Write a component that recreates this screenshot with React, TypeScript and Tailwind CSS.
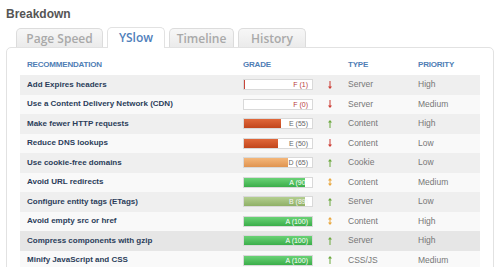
import React from 'react';

type Row = {
  name: string;
  grade: string;
  score: number;
  fill: string;
  textColor: string;
  dir: 'up' | 'down' | 'both';
  type: string;
  priority: string;
};

const rows: Row[] = [
  { name: 'Add Expires headers', grade: 'F (1)', score: 1, fill: 'bg-[#c8463a]', textColor: 'text-[#b83a3a]', dir: 'down', type: 'Server', priority: 'High' },
  { name: 'Use a Content Delivery Network (CDN)', grade: 'F (0)', score: 0, fill: 'bg-[#c8463a]', textColor: 'text-[#b83a3a]', dir: 'down', type: 'Server', priority: 'Medium' },
  { name: 'Make fewer HTTP requests', grade: 'E (55)', score: 55, fill: 'bg-gradient-to-b from-[#e0683a] to-[#c2461c]', textColor: 'text-[#666]', dir: 'up', type: 'Content', priority: 'High' },
  { name: 'Reduce DNS lookups', grade: 'E (50)', score: 50, fill: 'bg-gradient-to-b from-[#e0683a] to-[#c2461c]', textColor: 'text-[#666]', dir: 'down', type: 'Content', priority: 'Low' },
  { name: 'Use cookie-free domains', grade: 'D (65)', score: 65, fill: 'bg-gradient-to-b from-[#f4b77a] to-[#e09450]', textColor: 'text-[#666]', dir: 'up', type: 'Cookie', priority: 'Low' },
  { name: 'Avoid URL redirects', grade: 'A (90)', score: 90, fill: 'bg-gradient-to-b from-[#6ad276] to-[#3aae4a]', textColor: 'text-white', dir: 'both', type: 'Content', priority: 'Medium' },
  { name: 'Configure entity tags (ETags)', grade: 'B (89)', score: 89, fill: 'bg-gradient-to-b from-[#b4cf90] to-[#8fb066]', textColor: 'text-[#f4f4f4]', dir: 'up', type: 'Server', priority: 'Low' },
  { name: 'Avoid empty src or href', grade: 'A (100)', score: 100, fill: 'bg-gradient-to-b from-[#6ad276] to-[#3aae4a]', textColor: 'text-white', dir: 'both', type: 'Content', priority: 'High' },
  { name: 'Compress components with gzip', grade: 'A (100)', score: 100, fill: 'bg-gradient-to-b from-[#6ad276] to-[#3aae4a]', textColor: 'text-white', dir: 'up', type: 'Server', priority: 'High' },
  { name: 'Minify JavaScript and CSS', grade: 'A (100)', score: 100, fill: 'bg-gradient-to-b from-[#6ad276] to-[#3aae4a]', textColor: 'text-white', dir: 'up', type: 'CSS/JS', priority: 'Medium' },
];

const rowBg = [
  'bg-[#efefef]', 'bg-[#f9f9f9]', 'bg-[#efefef]', 'bg-[#f9f9f9]', 'bg-[#efefef]',
  'bg-[#f9f9f9]', 'bg-[#efefef]', 'bg-[#f9f9f9]', 'bg-[#e6e6e6]', 'bg-[#f9f9f9]',
];

function Arrow({ dir }: { dir: Row['dir'] }) {
  const color = dir === 'down' ? '#cc3b32' : dir === 'up' ? '#6aa83c' : '#e8a63c';
  return (
    <svg width="4" height="8" viewBox="0 0 4 8">
      {dir !== 'down' && <polygon points="2,0 4,2.5 0,2.5" fill={color} />}
      {dir !== 'up' && <polygon points="2,8 4,5.5 0,5.5" fill={color} />}
      <rect x="1.5" y={dir === 'down' ? 0 : 2} width="1" height={dir === 'both' ? 4 : 6} fill={color} />
    </svg>
  );
}

function Bar({ row }: { row: Row }) {
  return (
    <div className="relative w-[70px] h-[11px] border border-[#d9d9d9] bg-white overflow-hidden">
      <div className={`absolute left-0 top-0 bottom-0 ${row.fill}`} style={{ width: `${row.score}%` }} />
      <span className={`absolute right-[4px] top-0 text-[7px] leading-[9px] ${row.textColor}`}>{row.grade}</span>
    </div>
  );
}

const tabs = ['Page Speed', 'YSlow', 'Timeline', 'History'];
const tabWidths = ['w-[87px]', 'w-[58px]', 'w-[65px]', 'w-[68px]'];

export default function App() {
  return (
    <div className="w-[500px] h-[267px] overflow-hidden bg-white font-['Liberation_Sans',Arial,sans-serif]">
      <h1 className="pl-[6px] pt-[7px] text-[12px] leading-[14px] font-bold text-[#555]">Breakdown</h1>

      <div className="flex gap-[4px] pl-[16px] mt-[6px] relative z-10 font-['Open_Sans',sans-serif]">
        {tabs.map((t, i) => (
          <div
            key={t}
            className={
              i === 1
                ? `${tabWidths[i]} h-[21px] -mb-px border border-b-0 border-[#e2e2e2] rounded-t-[5px] bg-white text-center text-[12px] leading-[20px] font-semibold text-[#4f80bb]`
                : `${tabWidths[i]} h-[19px] mt-[1px] border border-b-0 border-[#dcdcdc] rounded-t-[5px] bg-gradient-to-b from-[#f7f7f7] to-[#ebebeb] text-center text-[12px] leading-[19px] font-semibold text-[#a9a9a9]`
            }
          >
            {t}
          </div>
        ))}
      </div>

      <div className="mx-[6px] border border-[#e2e2e2] rounded-[5px] px-[13px] pt-[6px] h-[260px]">
        <div className="grid grid-cols-[223px_80px_25px_70px_1fr] h-[21px] items-center text-[8px] font-bold text-[#4f7eb5] tracking-[-0.2px]">
          <div className="pl-[7px]">RECOMMENDATION</div>
          <div>GRADE</div>
          <div />
          <div>TYPE</div>
          <div>PRIORITY</div>
        </div>
        {rows.map((r, i) => (
          <div key={r.name} className={`grid grid-cols-[223px_80px_25px_70px_1fr] h-[19.5px] items-center ${rowBg[i]}`}>
            <div className="pl-[7px] text-[8px] font-bold text-[#2b3d5a]">{r.name}</div>
            <div><Bar row={r} /></div>
            <div className="pl-[5px] flex items-center"><Arrow dir={r.dir} /></div>
            <div className="text-[8.5px] text-[#777]">{r.type}</div>
            <div className="text-[8.5px] text-[#777]">{r.priority}</div>
          </div>
        ))}
      </div>
    </div>
  );
}
